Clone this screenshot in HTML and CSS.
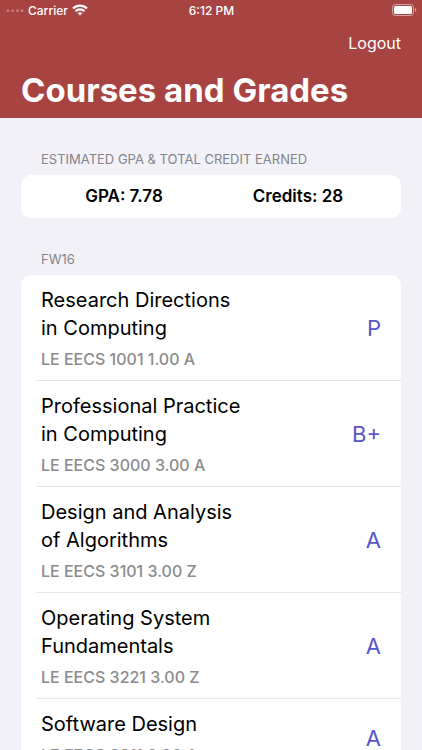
FILE: index.html
```html
<!DOCTYPE html>
<html lang="en">
<head>
<meta charset="utf-8">
<meta name="viewport" content="width=device-width, initial-scale=1">
<title>Courses and Grades</title>
<link rel="stylesheet" href="styles.css">
</head>
<body>
<header class="header">
  <div class="status">
    <div class="carrier">
      <svg width="18" height="4" viewBox="0 0 18 4" fill="#fff" fill-opacity=".3" aria-hidden="true"><circle cx="2" cy="2.8" r="1.5"/><circle cx="6.7" cy="2.8" r="1.5"/><circle cx="11.4" cy="2.8" r="1.5"/><circle cx="16" cy="2.8" r="1.5"/></svg>
      <span>Carrier</span>
      <svg width="16" height="12" viewBox="0 0 16 12" fill="none" stroke="#fff" stroke-width="2.1" aria-hidden="true"><path d="M1 4.6C4.9.6 11.1.6 15 4.6"/><path d="M3.5 7.2c2.5-2.5 6.5-2.5 9 0"/><path d="M5.6 9.1c1.3-1.3 3.5-1.3 4.8 0L8 11.6z" fill="#fff" stroke="none"/></svg>
    </div>
    <time>6:12 PM</time>
    <svg class="battery" width="25" height="12" viewBox="0 0 25 12" aria-hidden="true"><rect x=".5" y=".5" width="21" height="11" rx="3" fill="none" stroke="#fff" stroke-opacity=".5"/><rect x="2" y="2" width="18" height="8" rx="1.6" fill="#fff"/><path d="M23 4c1.8.7 1.8 3.3 0 4z" fill="#fff" fill-opacity=".5"/></svg>
  </div>
  <nav class="nav"><button class="logout" type="button">Logout</button></nav>
  <h1 class="title">Courses and Grades</h1>
</header>
<main class="content">
  <section>
    <h2 class="label">ESTIMATED GPA &amp; TOTAL CREDIT EARNED</h2>
    <div class="card summary"><span>GPA: 7.78</span><span>Credits: 28</span></div>
  </section>
  <section>
    <h2 class="label">FW16</h2>
    <ul class="card list">
      <li class="course"><div><h3 class="name">Research Directions<br>in Computing</h3><p class="code">LE EECS 1001 1.00 A</p></div><span class="grade">P</span></li>
      <li class="course"><div><h3 class="name">Professional Practice<br>in Computing</h3><p class="code">LE EECS 3000 3.00 A</p></div><span class="grade">B+</span></li>
      <li class="course"><div><h3 class="name">Design and Analysis<br>of Algorithms</h3><p class="code">LE EECS 3101 3.00 Z</p></div><span class="grade">A</span></li>
      <li class="course"><div><h3 class="name">Operating System<br>Fundamentals</h3><p class="code">LE EECS 3221 3.00 Z</p></div><span class="grade">A</span></li>
      <li class="course"><div><h3 class="name">Software Design</h3><p class="code">LE EECS 3311 3.00 A</p></div><span class="grade">A</span></li>
    </ul>
  </section>
</main>
</body>
</html>
```
FILE: styles.css
```css
* {
  box-sizing: border-box;
}

body {
  display: flex;
  flex-direction: column;
  height: 100vh;
  margin: 0;
  overflow: hidden;
  background: #f2f1f7;
  color: #000;
  font-family: Inter, "Liberation Sans", sans-serif;
}

h1, h2, h3, p, ul {
  margin: 0;
  padding: 0;
}

.header {
  flex: none;
  background: #a74442;
  color: #fff;
}

.status {
  display: grid;
  grid-template-columns: 1fr auto 1fr;
  align-items: center;
  height: 20px;
  padding: 0 5px 0 6px;
  font-size: 12px;
  font-weight: 500;
}

.carrier {
  display: flex;
  align-items: center;
  gap: 4px;
}

.battery {
  justify-self: end;
}

.nav {
  display: flex;
  justify-content: flex-end;
  padding: 0 21px;
}

.logout {
  height: 46px;
  padding: 0;
  border: 0;
  background: none;
  color: inherit;
  font: 400 16px/46px Inter, "Liberation Sans", sans-serif;
}

.title {
  padding: 3px 21px 7px;
  font-size: 33px;
  font-weight: 700;
  line-height: 42px;
}

.content {
  flex: 1;
  min-height: 0;
  overflow: auto;
  padding: 0 21px;
  scrollbar-width: none;
}

.label {
  padding: 32px 20px 7px;
  color: #858489;
  font-size: 13px;
  font-weight: 400;
  line-height: 18px;
}

.card {
  border-radius: 10px;
  background: #fff;
}

.summary {
  display: grid;
  grid-template-columns: 1fr 1fr;
  padding: 0 16px;
  font-size: 17px;
  font-weight: 600;
  line-height: 43px;
  text-align: center;
}

.list {
  list-style: none;
}

.course {
  display: flex;
  align-items: center;
  justify-content: space-between;
  margin-left: 15px;
  padding: 11px 20px 10px 5px;
  border-bottom: 1px solid #e6e6e8;
}

.course:last-child {
  border-bottom: 0;
}

.name {
  font-size: 20px;
  font-weight: 400;
  line-height: 28px;
}

.code {
  margin-top: 6px;
  color: #8b8b8d;
  font-size: 16px;
  font-weight: 500;
  line-height: 22px;
}

.grade {
  color: #5956c9;
  font-size: 22px;
}
```
